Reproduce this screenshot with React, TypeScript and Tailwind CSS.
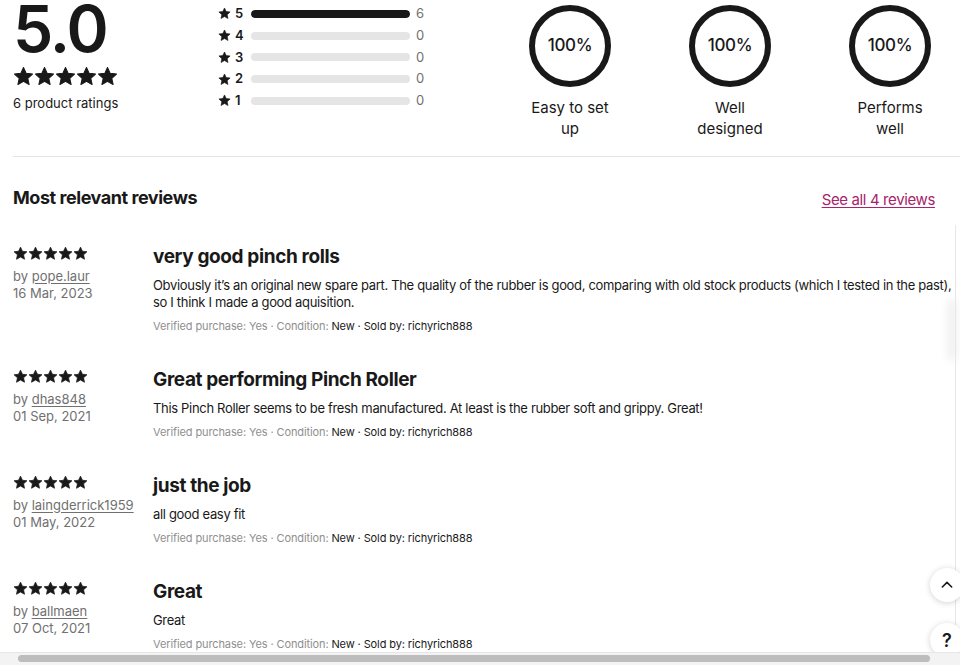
import React from 'react';

const Star: React.FC<{ size: number; className?: string }> = ({ size, className }) => (
  <svg width={size} height={size} viewBox="0 0 24 24" className={className}>
    <path
      d="M12 1.8l3.1 6.6 7.2.8-5.4 4.9 1.5 7.1L12 17.6l-6.4 3.6 1.5-7.1L1.7 9.2l7.2-.8z"
      fill="currentColor"
      stroke="currentColor"
      strokeWidth="1.2"
      strokeLinejoin="round"
    />
  </svg>
);

const Stars: React.FC<{ size: number }> = ({ size }) => (
  <div className="flex text-[#191919]">
    {[0, 1, 2, 3, 4].map((i) => (
      <Star key={i} size={size} />
    ))}
  </div>
);

const histogram = [
  { star: 5, count: 6 },
  { star: 4, count: 0 },
  { star: 3, count: 0 },
  { star: 2, count: 0 },
  { star: 1, count: 0 },
];

const aspects = [
  ['Easy to set', 'up'],
  ['Well', 'designed'],
  ['Performs', 'well'],
];

interface Review {
  title: string;
  user: string;
  date: string;
  body: string[];
}

const reviews: Review[] = [
  {
    title: 'very good pinch rolls',
    user: 'pope.laur',
    date: '16 Mar, 2023',
    body: [
      'Obviously it\u2019s an original new spare part. The quality of the rubber is good, comparing with old stock products (which I tested in the past),',
      'so I think I made a good aquisition.',
    ],
  },
  {
    title: 'Great performing Pinch Roller',
    user: 'dhas848',
    date: '01 Sep, 2021',
    body: ['This Pinch Roller seems to be fresh manufactured. At least is the rubber soft and grippy. Great!'],
  },
  {
    title: 'just the job',
    user: 'laingderrick1959',
    date: '01 May, 2022',
    body: ['all good easy fit'],
  },
  {
    title: 'Great',
    user: 'ballmaen',
    date: '07 Oct, 2021',
    body: ['Great'],
  },
];

const ReviewItem: React.FC<{ review: Review }> = ({ review }) => (
  <div className="grid grid-cols-[140px_1fr] pb-[34px]">
    <div className="pt-px">
      <Stars size={15} />
      <div className="mt-[7px] text-[13px] leading-[17px] text-[#707070]">
        by <span className="underline underline-offset-2">{review.user}</span>
      </div>
      <div className="text-[13px] leading-[17px] text-[#707070]">{review.date}</div>
    </div>
    <div className="min-w-0">
      <h4 className="text-[19px] leading-[24px] font-bold tracking-[-0.02em] whitespace-nowrap">{review.title}</h4>
      <p className="mt-[8px] text-[13px] leading-[17px] whitespace-nowrap tracking-[-0.025em]">
        {review.body.map((line, i) => (
          <React.Fragment key={i}>
            {i > 0 && <br />}
            {line}
          </React.Fragment>
        ))}
      </p>
      <div className="mt-[7px] text-[11px] leading-[16px] whitespace-nowrap tracking-[-0.01em]">
        <span className="text-[#8f8f8f]">Verified purchase: Yes · Condition: </span>
        <span>New · Sold by: richyrich888</span>
      </div>
    </div>
  </div>
);

export default function App() {
  return (
    <div className="relative w-[960px] h-[665px] overflow-hidden bg-white text-[#191919] font-['Inter','Liberation_Sans',sans-serif]">
      {/* Rating summary */}
      <div className="flex h-[156px] pl-[13px] overflow-hidden">
        <div className="w-[205px] shrink-0">
          <div className="text-[64px] leading-[58px] font-semibold tracking-[-0.03em]">5.0</div>
          <div className="mt-[8px]">
            <Stars size={21} />
          </div>
          <div className="mt-[8px] text-[13px] leading-[17px]">6 product ratings</div>
        </div>

        <div className="w-[272px] shrink-0 pt-[3px]">
          {histogram.map((row) => (
            <div key={row.star} className="flex items-center h-[21.75px]">
              <Star size={13} className="text-[#191919]" />
              <span className="ml-[4px] w-[16px] text-[13px] font-semibold">{row.star}</span>
              <div className="w-[159px] h-[8px] rounded-full bg-[#e5e5e5] overflow-hidden">
                <div
                  className="h-full rounded-full bg-[#191919]"
                  style={{ width: `${(row.count / 6) * 100}%` }}
                />
              </div>
              <span className="ml-[6px] text-[13px] text-[#707070]">{row.count}</span>
            </div>
          ))}
        </div>

        <div className="flex shrink-0">
          {aspects.map((label, i) => (
            <div key={i} className="w-[160px] flex flex-col items-center pt-[5px]">
              <div className="relative w-[82px] h-[82px] flex items-center justify-center">
                <svg width="82" height="82" viewBox="0 0 82 82" className="absolute inset-0">
                  <circle cx="41" cy="41" r="38" fill="none" stroke="#191919" strokeWidth="6" />
                </svg>
                <span className="text-[17px] font-medium tracking-[-0.02em]">100%</span>
              </div>
              <div className="mt-[10px] text-[15px] leading-[21px] text-center">
                {label[0]}
                <br />
                {label[1]}
              </div>
            </div>
          ))}
        </div>
      </div>

      <div className="ml-[13px] h-px bg-[#e5e5e5]" />

      {/* Reviews */}
      <div className="w-[955px] overflow-hidden pl-[13px]">
        <div className="flex items-center justify-between pt-[27px] pr-[20px]">
          <h3 className="text-[18px] leading-[24px] font-bold tracking-[-0.025em]">Most relevant reviews</h3>
          <a href="#" className="mt-[5px] text-[15px] tracking-[-0.025em] text-[#a8236a] underline underline-offset-2">
            See all 4 reviews
          </a>
        </div>

        <div className="mt-[33px]">
          {reviews.map((r, i) => (
            <ReviewItem key={i} review={r} />
          ))}
        </div>
      </div>

      {/* right edge of neighbouring panel */}
      <div className="absolute left-[955px] top-[225px] bottom-[12px] w-[5px] border-l border-[#e8e8e8] bg-white" />
      <div className="absolute left-[948px] top-[300px] w-[8px] h-[60px] bg-[#e6e6e6] blur-[4px] opacity-70" />

      {/* floating buttons */}
      <button className="absolute left-[930px] top-[568px] w-[34px] h-[34px] rounded-full bg-white shadow-[0_1px_6px_rgba(0,0,0,0.18)] flex items-center justify-center">
        <svg width="16" height="16" viewBox="0 0 24 24" fill="none" stroke="#191919" strokeWidth="2.4" strokeLinecap="round" strokeLinejoin="round">
          <path d="M5 15l7-7 7 7" />
        </svg>
      </button>
      <button className="absolute left-[930px] top-[623px] w-[34px] h-[34px] rounded-full bg-white shadow-[0_1px_6px_rgba(0,0,0,0.18)] flex items-center justify-center text-[18px] font-semibold">
        ?
      </button>

      {/* horizontal scrollbar */}
      <div className="absolute left-0 right-0 bottom-0 h-[13px] bg-[#f3f3f3] border-t border-[#e6e6e6]">
        <div className="ml-[18px] mt-[2px] w-[912px] h-[7px] rounded-full bg-[#bdbdbd]" />
      </div>
    </div>
  );
}
